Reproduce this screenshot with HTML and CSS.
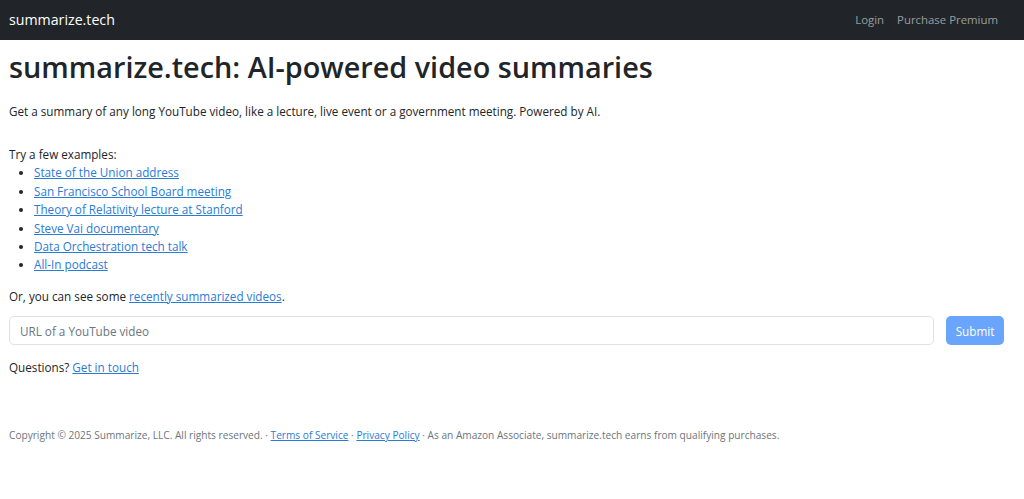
FILE: index.html
```html
<!DOCTYPE html>
<html lang="en">
<head>
<meta charset="utf-8">
<title>summarize.tech: AI-powered video summaries</title>
<link rel="stylesheet" href="styles.css">
</head>
<body>
<nav class="navbar">
  <a class="brand" href="#">summarize.tech</a>
  <div class="nav-links">
    <a href="#">Login</a>
    <a href="#">Purchase Premium</a>
  </div>
</nav>
<main class="container">
  <h1>summarize.tech: AI-powered video summaries</h1>
  <p class="lead">Get a summary of any long YouTube video, like a lecture, live event or a government meeting. Powered by AI.</p>
  <div class="examples">
    <div>Try a few examples:</div>
    <ul>
      <li><a href="#">State of the Union address</a></li>
      <li><a href="#">San Francisco School Board meeting</a></li>
      <li><a href="#">Theory of Relativity lecture at Stanford</a></li>
      <li><a href="#">Steve Vai documentary</a></li>
      <li><a href="#">Data Orchestration tech talk</a></li>
      <li><a href="#">All-In podcast</a></li>
    </ul>
  </div>
  <p class="recent">Or, you can see some <a href="#">recently summarized videos</a>.</p>
  <form class="url-form">
    <input class="url-input" type="text" placeholder="URL of a YouTube video">
    <button class="submit" type="button" disabled>Submit</button>
  </form>
  <p class="questions">Questions? <a href="#">Get in touch</a></p>
  <footer class="footer">Copyright © 2025 Summarize, LLC. All rights reserved. · <a href="#">Terms of Service</a> · <a href="#">Privacy Policy</a> · As an Amazon Associate, summarize.tech earns from qualifying purchases.</footer>
</main>
</body>
</html>
```
FILE: styles.css
```css
* { box-sizing: border-box; }
html, body { margin: 0; padding: 0; }
body {
  font-family: "Open Sans", "Noto Sans", "Liberation Sans", sans-serif;
  font-size: 11.7px;
  line-height: 18.4px;
  color: #212529;
  background: #fff;
}
a { color: #2a7bd6; text-decoration: underline; }
.navbar {
  height: 40px;
  background: #212529;
  display: flex;
  align-items: center;
  justify-content: space-between;
  padding: 0 26px 0 9px;
}
.brand {
  color: #fff;
  text-decoration: none;
  font-size: 14.2px;
}
.nav-links { display: flex; gap: 13px; }
.nav-links a {
  color: rgba(255,255,255,0.55);
  text-decoration: none;
  font-size: 11.4px;
}
.container { padding: 0 20px 0 9px; }
h1 {
  font-size: 28.8px;
  font-weight: 600;
  line-height: 1.2;
  margin: 10px 0 0;
}
.lead { margin: 17px 0 0; }
.examples { margin-top: 25px; }
ul { margin: 0; padding-left: 25px; }
.recent { margin: 13px 0 0; }
.url-form {
  display: flex;
  gap: 12px;
  margin-top: 11px;
}
.url-input {
  flex: 1;
  height: 29px;
  border: 1px solid #dee2e6;
  border-radius: 5px;
  padding: 0 10px;
  font: inherit;
  color: #212529;
}
.url-input::placeholder { color: #6c757d; }
.submit {
  height: 29px;
  width: 58px;
  border: none;
  border-radius: 5px;
  background: #6aa5fd;
  color: #fff;
  font: inherit;
}
.questions { margin: 13px 0 0; }
.footer {
  margin-top: 49px;
  font-size: 10.15px;
  color: #6c757d;
}
```
